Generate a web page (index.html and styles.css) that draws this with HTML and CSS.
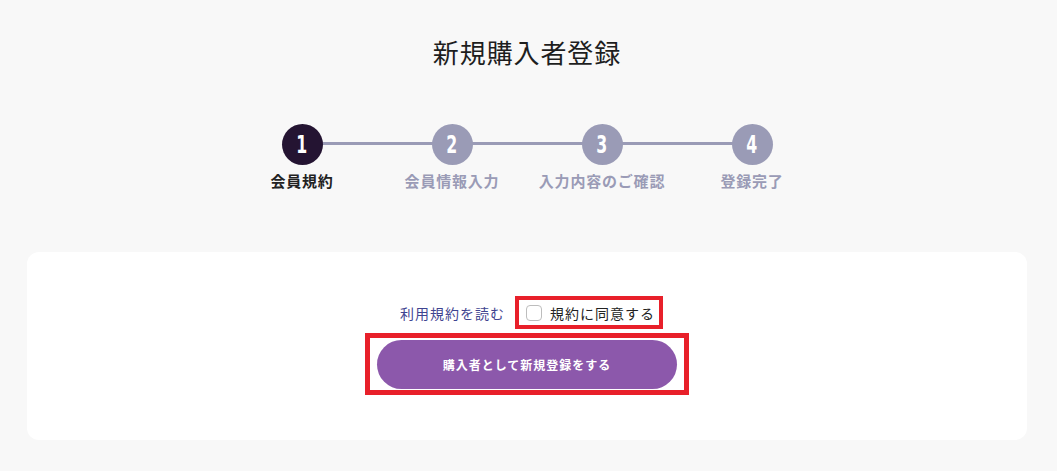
FILE: index.html
```html
<!DOCTYPE html>
<html lang="ja">
<head>
<meta charset="utf-8">
<title>新規購入者登録</title>
<link rel="stylesheet" href="styles.css">
</head>
<body>
<main class="page">
  <h1 class="title">新規購入者登録</h1>
  <ol class="steps">
    <li class="step is-active"><span class="step-num"><span class="digit">1</span></span><span class="step-label">会員規約</span></li>
    <li class="step"><span class="step-num"><span class="digit">2</span></span><span class="step-label">会員情報入力</span></li>
    <li class="step"><span class="step-num"><span class="digit">3</span></span><span class="step-label">入力内容のご確認</span></li>
    <li class="step"><span class="step-num"><span class="digit">4</span></span><span class="step-label">登録完了</span></li>
  </ol>
  <section class="card">
    <div class="agree-row">
      <a class="terms-link" href="#">利用規約を読む</a>
      <label class="agree-box mark"><input type="checkbox" class="check"><span>規約に同意する</span></label>
    </div>
    <div class="submit-wrap mark mark-thick">
      <button type="button" class="submit">購入者として新規登録をする</button>
    </div>
  </section>
</main>
</body>
</html>
```

FILE: styles.css
```css
* { box-sizing: border-box; }
html, body { margin: 0; padding: 0; }
body {
  background: #f8f8f8;
  font-family: "Noto Sans CJK JP", "Noto Sans", sans-serif;
  color: #222;
  padding-right: 3px;
}
.page {
  width: 1000px;
  margin: 0 auto;
  display: flex;
  flex-direction: column;
  align-items: center;
}
.title {
  margin: 33px 0 0;
  font-size: 26px;
  line-height: 38px;
  font-weight: 400;
  letter-spacing: 0.9px;
  color: #1e1e1e;
}
.steps {
  position: relative;
  list-style: none;
  margin: 53px 0 0;
  padding: 0;
  display: flex;
  width: 600px;
}
.steps::before {
  content: "";
  position: absolute;
  top: 18px;
  left: 75px;
  right: 75px;
  height: 3px;
  background: #9a9bb6;
}
.step {
  position: relative;
  width: 150px;
  display: flex;
  flex-direction: column;
  align-items: center;
}
.step-num {
  width: 41px;
  height: 41px;
  border-radius: 50%;
  background: #9a9bb6;
  color: #fff;
  display: flex;
  align-items: center;
  justify-content: center;
}
.digit {
  display: inline-block;
  font-family: "DejaVu Sans Condensed", "DejaVu Sans", sans-serif;
  font-weight: 700;
  font-size: 25px;
  line-height: 1;
  transform: scaleX(0.7);
}
.step-label {
  margin-top: 6px;
  font-size: 15px;
  line-height: 20px;
  font-weight: 700;
  letter-spacing: 0.8px;
  color: #9a9bb6;
  white-space: nowrap;
}
.step.is-active .step-num { background: #241432; }
.step.is-active .step-label { color: #222; }

.card {
  margin-top: 61px;
  width: 1000px;
  height: 188px;
  background: #fff;
  border-radius: 12px;
  padding-top: 44px;
  display: flex;
  flex-direction: column;
  align-items: center;
}
.agree-row {
  display: flex;
  align-items: center;
  gap: 10px;
  padding-left: 9px;
}
.terms-link {
  font-size: 14px;
  letter-spacing: 1px;
  color: #3f4490;
  text-decoration: none;
}
.mark { border: 4px solid #e8202a; }
.mark-thick { border-width: 5px; }
.agree-box {
  display: flex;
  align-items: center;
  gap: 8px;
  width: 148px;
  height: 33px;
  padding-left: 7px;
  font-size: 14px;
  letter-spacing: 1px;
  color: #222;
}
.check {
  appearance: none;
  -webkit-appearance: none;
  margin: 0;
  width: 16px;
  height: 16px;
  border: 1px solid #bdbdbd;
  border-radius: 4px;
  background: #fff;
}
.submit-wrap {
  margin-top: 4px;
  width: 324px;
  height: 62px;
  display: flex;
  align-items: center;
  justify-content: center;
}
.submit {
  width: 300px;
  height: 49px;
  border: 0;
  border-radius: 25px;
  background: #8c58ab;
  color: #fff;
  font-family: "Noto Sans CJK JP", sans-serif;
  font-size: 12px;
  font-weight: 700;
  letter-spacing: 1px;
  cursor: pointer;
}
```
